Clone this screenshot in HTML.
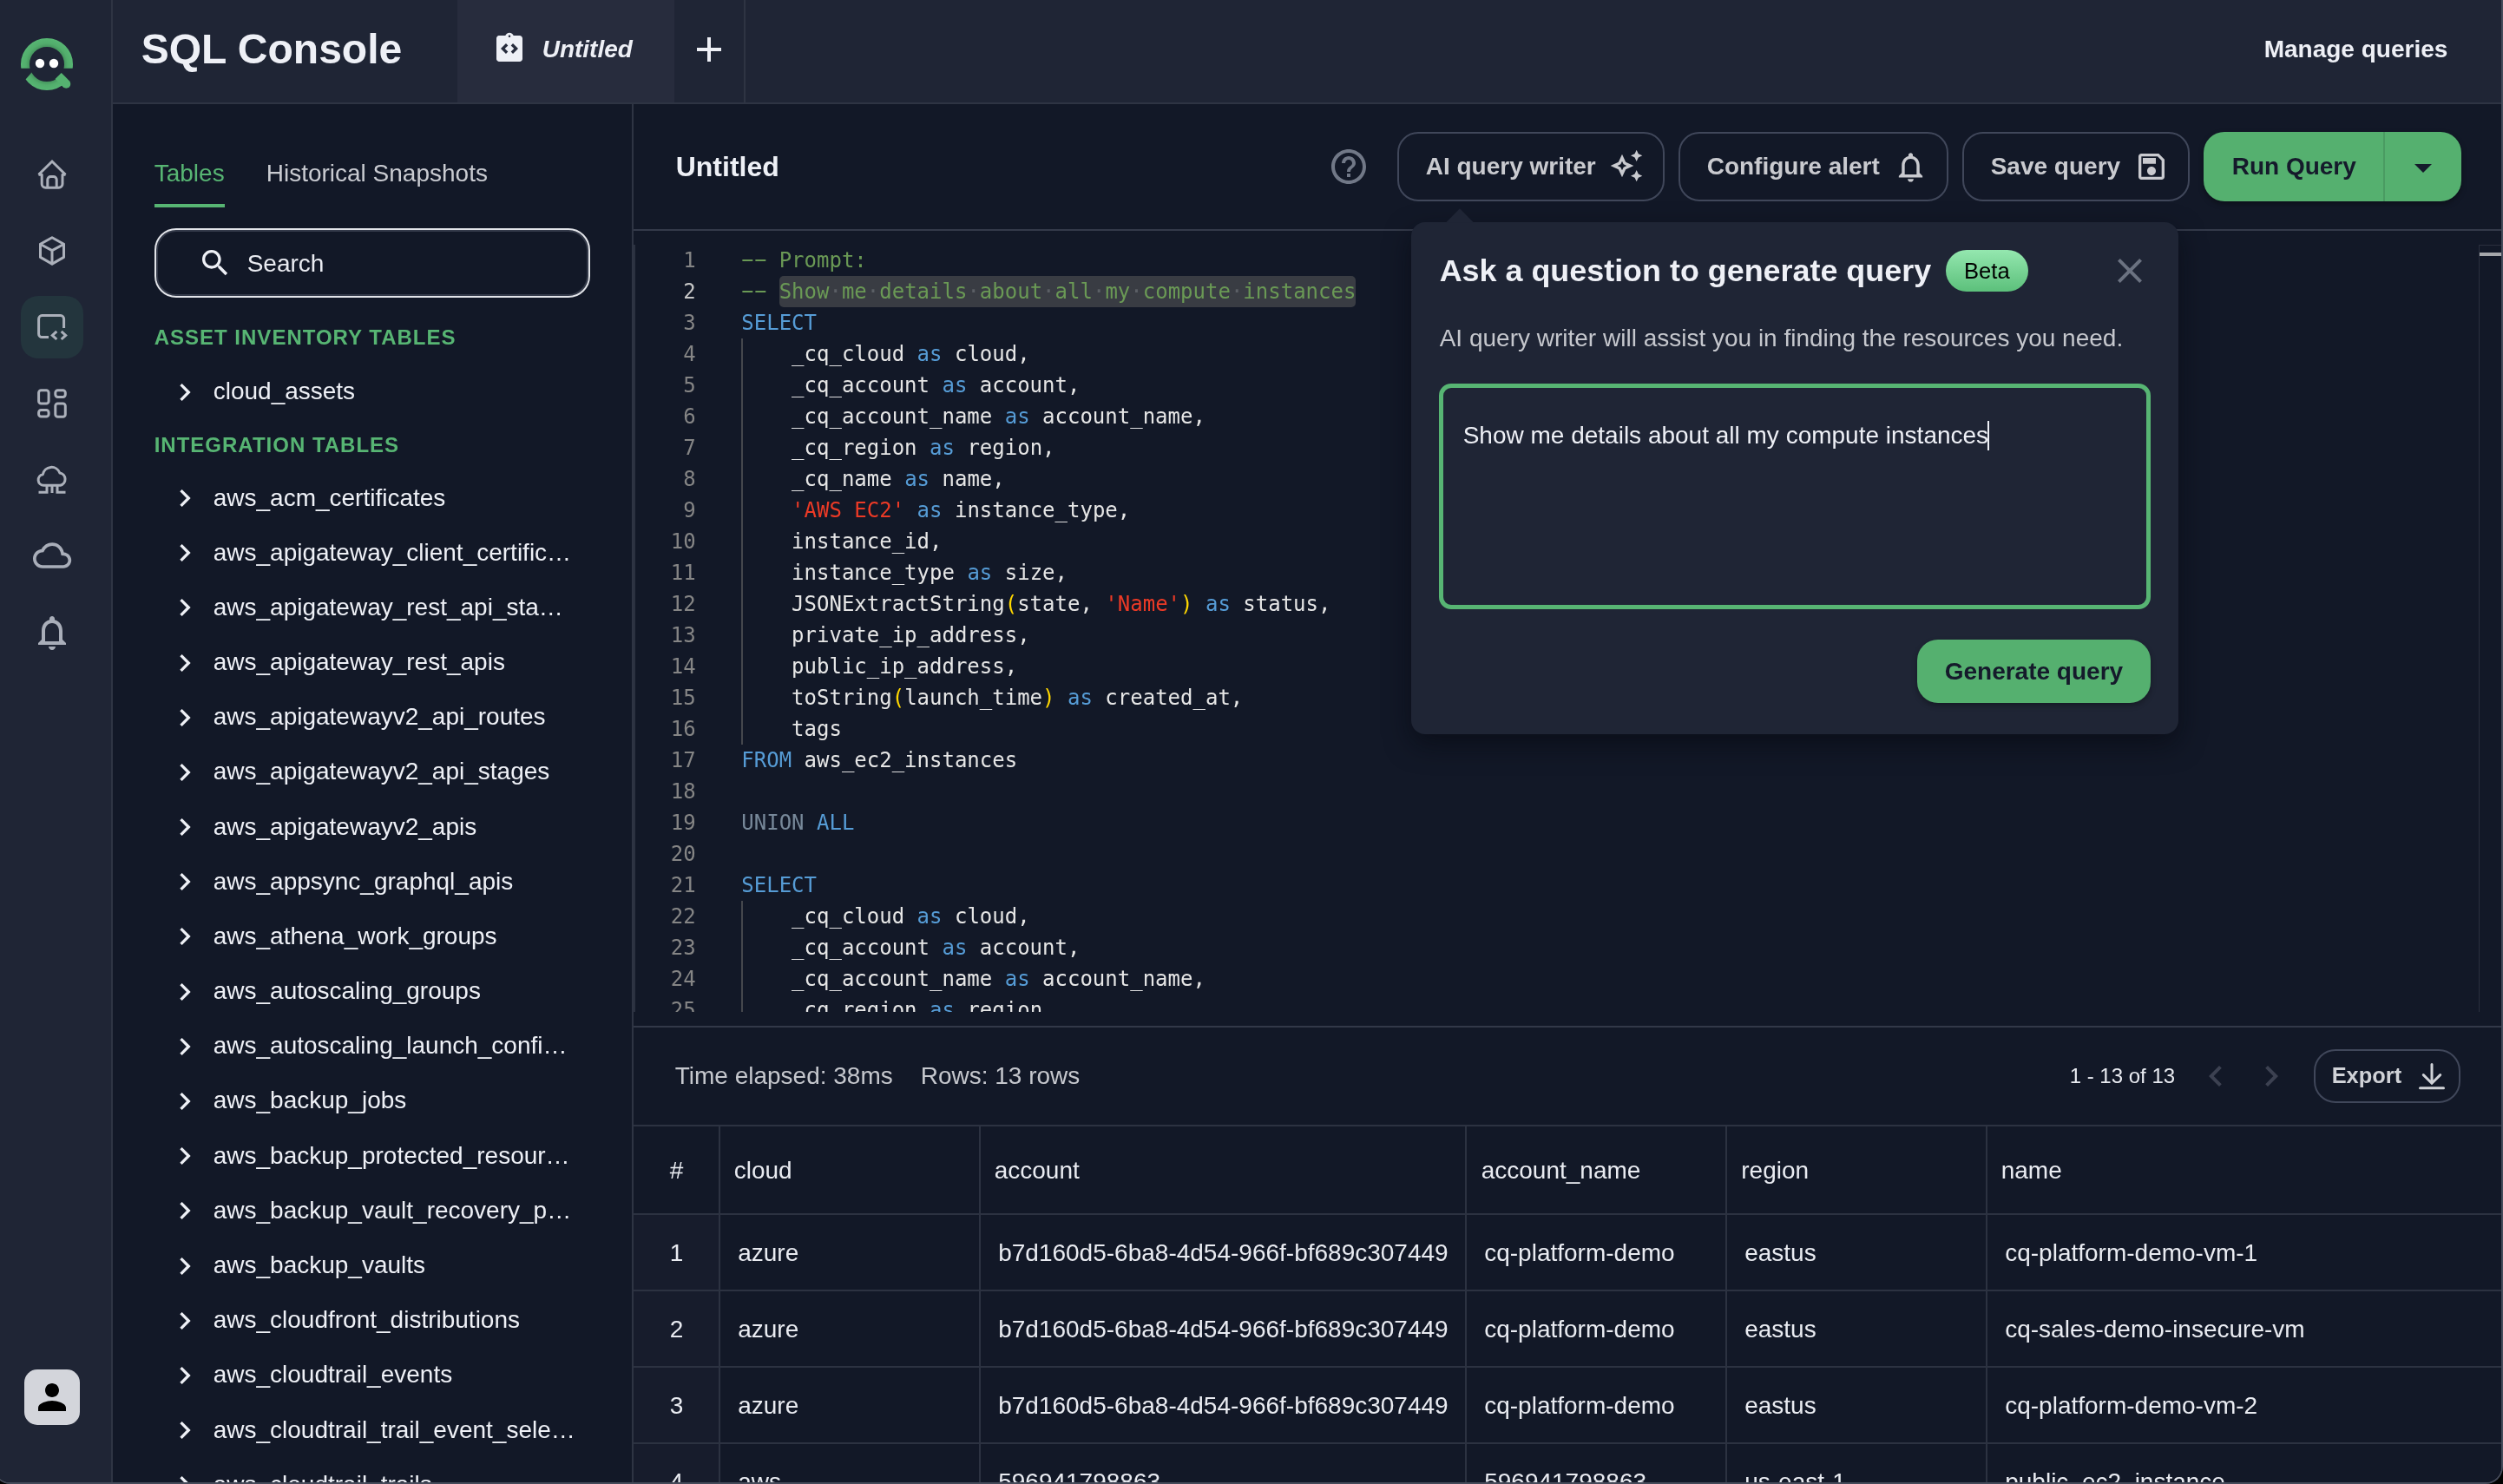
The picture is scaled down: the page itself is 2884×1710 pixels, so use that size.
<!DOCTYPE html>
<html lang="en"><head><meta charset="utf-8"><title>SQL Console</title>
<style>
*{box-sizing:border-box;margin:0;padding:0}
html,body{width:2884px;height:1710px;overflow:hidden;background:#000}
body{font-family:"Liberation Sans",sans-serif;position:relative;color:#e9ebf1;-webkit-font-smoothing:antialiased}
#win{position:absolute;left:-8px;top:0;width:2892px;height:1710px;border:2.3px solid #454b5a;border-top:none;border-radius:0 0 20px 20px;overflow:hidden;background:#121827;will-change:transform}
#app{position:absolute;left:5.7px;top:0;width:2884px;height:1710px;background:#121827}
.abs{position:absolute}
#rail{position:absolute;left:0;top:0;width:130px;height:1710px;background:#1f2535;border-right:2px solid #2e3443}
#hdr{position:absolute;left:130px;top:0;width:2754px;height:120px;background:#1f2535;border-bottom:2px solid #2e3443}
#side{position:absolute;left:130px;top:120px;width:600px;height:1590px;background:#121827;border-right:2px solid #2e3443;overflow:hidden}
#main{position:absolute;left:730px;top:120px;width:2154px;height:1590px;background:#121827;overflow:hidden}
svg{position:absolute;overflow:visible}
.code{font-family:"DejaVu Sans Mono","Liberation Mono",monospace;font-size:24px;line-height:36px;white-space:pre;position:absolute;color:#e6e6e6}
.ln{position:absolute;left:0;width:72px;text-align:right;color:#858585}
.c{color:#6a9955}.k{color:#569cd6}.s{color:#ec3a26}.p{color:#ffd700}.o{color:#778899}
.btn{position:absolute;border:2px solid #40475a;border-radius:24px;height:80px;top:32px}
.cell{position:absolute;white-space:nowrap;font-size:28px;line-height:28px;color:#e9ebf1}

.sel{}
.ws{color:#5b5f65}
.hy{display:inline-block;transform:translateY(-0.8px) scaleX(1.95)}
</style></head><body>
<div id="win"><div id="app">
<div id="hdr">
<div style="position:absolute;white-space:nowrap;left:33px;top:33.37px;font-size:48px;line-height:48px;color:#eef0f6;font-weight:bold;">SQL Console</div>
<div class="abs" style="left:397px;top:0;width:250px;height:118px;background:#272c3d"></div>
<svg style="left:437px;top:36.4px" width="40" height="40" viewBox="0 0 24 24"><path fill="#eef0f6" d="M19 3h-4.180C14.400 1.840 13.300 1 12 1s-2.400.840-2.820 2H5c-.140 0-.270.010-.400.040-.390.080-.740.280-1.010.550-.180.180-.330.400-.430.640-.100.230-.160.490-.160.770v14c0 .270.060.540.160.780s.250.450.430.640c.270.270.620.470 1.010.550.130.020.260.030.400.030h14c1.100 0 2-.900 2-2V5c0-1.100-.900-2-2-2zM11 14.170l-1.410 1.420L6 12l3.590-3.590L11 9.830 8.830 12 11 14.170zm1-9.920c-.410 0-.750-.340-.750-.750s.340-.750.750-.750.750.340.750.750-.340.750-.750.750zm2.410 11.340L13 14.170 15.170 12 13 9.830l1.410-1.420L18 12l-3.590 3.590z"/></svg>
<div style="position:absolute;white-space:nowrap;left:495px;top:43.20px;font-size:28px;line-height:28px;color:#eef0f6;font-weight:bold;font-style:italic;">Untitled</div>
<div class="abs" style="left:673px;top:55px;width:28px;height:4px;background:#eef0f6"></div><div class="abs" style="left:685px;top:43px;width:4px;height:28px;background:#eef0f6"></div>
<div class="abs" style="left:727px;top:0;width:2px;height:118px;background:#2e3443"></div>
<div style="position:absolute;white-space:nowrap;left:2479px;top:42.90px;font-size:28px;line-height:28px;color:#eef0f6;font-weight:bold;">Manage queries</div>
</div>
<div id="side">
<div style="position:absolute;white-space:nowrap;left:48px;top:66.20px;font-size:28px;line-height:28px;color:#57b573;">Tables</div>
<div class="abs" style="left:48px;top:115px;width:81px;height:4px;background:#57b573"></div>
<div style="position:absolute;white-space:nowrap;left:177px;top:66.20px;font-size:28px;line-height:28px;color:#c9cbd1;">Historical Snapshots</div>
<div class="abs" style="left:48px;top:142.60000000000002px;width:502px;height:80.6px;border:2px solid #e2e4e9;border-radius:25px;box-shadow:inset 0 0 0 2px #343a4a"></div>
<svg style="left:98px;top:163px" width="40" height="40" viewBox="0 0 24 24"><path fill="#eef0f6" d="M15.5 14h-.79l-.28-.27C15.41 12.59 16 11.11 16 9.5 16 5.91 13.09 3 9.5 3S3 5.91 3 9.5 5.91 16 9.5 16c1.61 0 3.09-.59 4.23-1.57l.27.28v.79l5 4.99L20.49 19l-4.99-5zm-6 0C7.01 14 5 11.99 5 9.5S7.01 5 9.5 5 14 7.01 14 9.5 11.99 14 9.5 14z"/></svg>
<div style="position:absolute;white-space:nowrap;left:155px;top:169.70px;font-size:28px;line-height:28px;color:#e9ebf1;">Search</div>
<div style="position:absolute;white-space:nowrap;left:48px;top:256.78px;font-size:24px;line-height:24px;color:#57b573;font-weight:bold;letter-spacing:1.0px;">ASSET INVENTORY TABLES</div>
<svg style="left:63.7px;top:311.7px" width="40" height="40" viewBox="0 0 24 24"><path fill="#eef0f6" d="M10 6L8.59 7.41 13.17 12l-4.58 4.59L10 18l6-6z"/></svg>
<div style="position:absolute;white-space:nowrap;left:116px;top:317.20px;font-size:28px;line-height:28px;color:#eef0f6;">cloud_assets</div>
<div style="position:absolute;white-space:nowrap;left:48px;top:381.38px;font-size:24px;line-height:24px;color:#57b573;font-weight:bold;letter-spacing:1.0px;">INTEGRATION TABLES</div>
<svg style="left:63.7px;top:434.0px" width="40" height="40" viewBox="0 0 24 24"><path fill="#eef0f6" d="M10 6L8.59 7.41 13.17 12l-4.58 4.59L10 18l6-6z"/></svg>
<div style="position:absolute;white-space:nowrap;left:116px;top:439.50px;font-size:28px;line-height:28px;color:#eef0f6;">aws_acm_certificates</div>
<svg style="left:63.7px;top:497.2px" width="40" height="40" viewBox="0 0 24 24"><path fill="#eef0f6" d="M10 6L8.59 7.41 13.17 12l-4.58 4.59L10 18l6-6z"/></svg>
<div style="position:absolute;white-space:nowrap;left:116px;top:502.68px;font-size:28px;line-height:28px;color:#eef0f6;">aws_apigateway_client_certific…</div>
<svg style="left:63.7px;top:560.4px" width="40" height="40" viewBox="0 0 24 24"><path fill="#eef0f6" d="M10 6L8.59 7.41 13.17 12l-4.58 4.59L10 18l6-6z"/></svg>
<div style="position:absolute;white-space:nowrap;left:116px;top:565.86px;font-size:28px;line-height:28px;color:#eef0f6;">aws_apigateway_rest_api_sta…</div>
<svg style="left:63.7px;top:623.5px" width="40" height="40" viewBox="0 0 24 24"><path fill="#eef0f6" d="M10 6L8.59 7.41 13.17 12l-4.58 4.59L10 18l6-6z"/></svg>
<div style="position:absolute;white-space:nowrap;left:116px;top:629.04px;font-size:28px;line-height:28px;color:#eef0f6;">aws_apigateway_rest_apis</div>
<svg style="left:63.7px;top:686.7px" width="40" height="40" viewBox="0 0 24 24"><path fill="#eef0f6" d="M10 6L8.59 7.41 13.17 12l-4.58 4.59L10 18l6-6z"/></svg>
<div style="position:absolute;white-space:nowrap;left:116px;top:692.22px;font-size:28px;line-height:28px;color:#eef0f6;">aws_apigatewayv2_api_routes</div>
<svg style="left:63.7px;top:749.9px" width="40" height="40" viewBox="0 0 24 24"><path fill="#eef0f6" d="M10 6L8.59 7.41 13.17 12l-4.58 4.59L10 18l6-6z"/></svg>
<div style="position:absolute;white-space:nowrap;left:116px;top:755.40px;font-size:28px;line-height:28px;color:#eef0f6;">aws_apigatewayv2_api_stages</div>
<svg style="left:63.7px;top:813.1px" width="40" height="40" viewBox="0 0 24 24"><path fill="#eef0f6" d="M10 6L8.59 7.41 13.17 12l-4.58 4.59L10 18l6-6z"/></svg>
<div style="position:absolute;white-space:nowrap;left:116px;top:818.58px;font-size:28px;line-height:28px;color:#eef0f6;">aws_apigatewayv2_apis</div>
<svg style="left:63.7px;top:876.3px" width="40" height="40" viewBox="0 0 24 24"><path fill="#eef0f6" d="M10 6L8.59 7.41 13.17 12l-4.58 4.59L10 18l6-6z"/></svg>
<div style="position:absolute;white-space:nowrap;left:116px;top:881.76px;font-size:28px;line-height:28px;color:#eef0f6;">aws_appsync_graphql_apis</div>
<svg style="left:63.7px;top:939.4px" width="40" height="40" viewBox="0 0 24 24"><path fill="#eef0f6" d="M10 6L8.59 7.41 13.17 12l-4.58 4.59L10 18l6-6z"/></svg>
<div style="position:absolute;white-space:nowrap;left:116px;top:944.94px;font-size:28px;line-height:28px;color:#eef0f6;">aws_athena_work_groups</div>
<svg style="left:63.7px;top:1002.6px" width="40" height="40" viewBox="0 0 24 24"><path fill="#eef0f6" d="M10 6L8.59 7.41 13.17 12l-4.58 4.59L10 18l6-6z"/></svg>
<div style="position:absolute;white-space:nowrap;left:116px;top:1008.12px;font-size:28px;line-height:28px;color:#eef0f6;">aws_autoscaling_groups</div>
<svg style="left:63.7px;top:1065.8px" width="40" height="40" viewBox="0 0 24 24"><path fill="#eef0f6" d="M10 6L8.59 7.41 13.17 12l-4.58 4.59L10 18l6-6z"/></svg>
<div style="position:absolute;white-space:nowrap;left:116px;top:1071.30px;font-size:28px;line-height:28px;color:#eef0f6;">aws_autoscaling_launch_confi…</div>
<svg style="left:63.7px;top:1129.0px" width="40" height="40" viewBox="0 0 24 24"><path fill="#eef0f6" d="M10 6L8.59 7.41 13.17 12l-4.58 4.59L10 18l6-6z"/></svg>
<div style="position:absolute;white-space:nowrap;left:116px;top:1134.48px;font-size:28px;line-height:28px;color:#eef0f6;">aws_backup_jobs</div>
<svg style="left:63.7px;top:1192.2px" width="40" height="40" viewBox="0 0 24 24"><path fill="#eef0f6" d="M10 6L8.59 7.41 13.17 12l-4.58 4.59L10 18l6-6z"/></svg>
<div style="position:absolute;white-space:nowrap;left:116px;top:1197.66px;font-size:28px;line-height:28px;color:#eef0f6;">aws_backup_protected_resour…</div>
<svg style="left:63.7px;top:1255.3px" width="40" height="40" viewBox="0 0 24 24"><path fill="#eef0f6" d="M10 6L8.59 7.41 13.17 12l-4.58 4.59L10 18l6-6z"/></svg>
<div style="position:absolute;white-space:nowrap;left:116px;top:1260.84px;font-size:28px;line-height:28px;color:#eef0f6;">aws_backup_vault_recovery_p…</div>
<svg style="left:63.7px;top:1318.5px" width="40" height="40" viewBox="0 0 24 24"><path fill="#eef0f6" d="M10 6L8.59 7.41 13.17 12l-4.58 4.59L10 18l6-6z"/></svg>
<div style="position:absolute;white-space:nowrap;left:116px;top:1324.02px;font-size:28px;line-height:28px;color:#eef0f6;">aws_backup_vaults</div>
<svg style="left:63.7px;top:1381.7px" width="40" height="40" viewBox="0 0 24 24"><path fill="#eef0f6" d="M10 6L8.59 7.41 13.17 12l-4.58 4.59L10 18l6-6z"/></svg>
<div style="position:absolute;white-space:nowrap;left:116px;top:1387.20px;font-size:28px;line-height:28px;color:#eef0f6;">aws_cloudfront_distributions</div>
<svg style="left:63.7px;top:1444.9px" width="40" height="40" viewBox="0 0 24 24"><path fill="#eef0f6" d="M10 6L8.59 7.41 13.17 12l-4.58 4.59L10 18l6-6z"/></svg>
<div style="position:absolute;white-space:nowrap;left:116px;top:1450.38px;font-size:28px;line-height:28px;color:#eef0f6;">aws_cloudtrail_events</div>
<svg style="left:63.7px;top:1508.1px" width="40" height="40" viewBox="0 0 24 24"><path fill="#eef0f6" d="M10 6L8.59 7.41 13.17 12l-4.58 4.59L10 18l6-6z"/></svg>
<div style="position:absolute;white-space:nowrap;left:116px;top:1513.56px;font-size:28px;line-height:28px;color:#eef0f6;">aws_cloudtrail_trail_event_sele…</div>
<svg style="left:63.7px;top:1571.2px" width="40" height="40" viewBox="0 0 24 24"><path fill="#eef0f6" d="M10 6L8.59 7.41 13.17 12l-4.58 4.59L10 18l6-6z"/></svg>
<div style="position:absolute;white-space:nowrap;left:116px;top:1576.74px;font-size:28px;line-height:28px;color:#eef0f6;">aws_cloudtrail_trails</div>
</div>
<div id="main">
<div class="abs" style="left:0;top:144px;width:2154px;height:2px;background:#343a4a"></div>
<div style="position:absolute;white-space:nowrap;left:49px;top:55.81px;font-size:32px;line-height:32px;color:#eef0f6;font-weight:bold;">Untitled</div>
<svg style="left:800px;top:48px" width="48" height="48" viewBox="0 0 24 24"><path fill="#717887" d="M11 18h2v-2h-2v2zm1-16C6.48 2 2 6.48 2 12s4.48 10 10 10 10-4.48 10-10S17.52 2 12 2zm0 18c-4.41 0-8-3.59-8-8s3.59-8 8-8 8 3.59 8 8-3.59 8-8 8zm0-14c-2.21 0-4 1.79-4 4h2c0-1.1.9-2 2-2s2 .9 2 2c0 2-3 1.75-3 5h2c0-2.25 3-2.5 3-5 0-2.21-1.79-4-4-4z"/></svg>
<div class="btn" style="left:880px;width:308px"></div>
<div style="position:absolute;white-space:nowrap;left:913px;top:58.20px;font-size:28px;line-height:28px;color:#c9cacf;font-weight:bold;">AI query writer</div>
<svg style="left:1124px;top:51px" width="40" height="40" viewBox="0 0 24 24"><path fill="#c9cacf" d="m19 9 1.25-2.75L23 5l-2.75-1.25L19 1l-1.25 2.75L15 5l2.75 1.25zm0 6-1.25 2.75L15 19l2.75 1.25L19 23l1.25-2.75L23 19l-2.75-1.25zm-7.5-5.5L9 4 6.500 9.500 1 12l5.500 2.500L9 20l2.500-5.500L17 12l-5.500-2.500zm-1.510 3.490L9 15.170l-.990-2.180L5.830 12l2.180-.990L9 8.830l.990 2.180 2.180.990-2.180.990z"/></svg>
<div class="btn" style="left:1204px;width:311px"></div>
<div style="position:absolute;white-space:nowrap;left:1237px;top:58.20px;font-size:28px;line-height:28px;color:#c9cacf;font-weight:bold;">Configure alert</div>
<svg style="left:1451px;top:51.5px" width="41" height="41" viewBox="0 0 24 24"><path fill="#c9cacf" d="M12 22c1.1 0 2-.9 2-2h-4c0 1.1.9 2 2 2zm6-6v-5c0-3.07-1.63-5.64-4.5-6.320V4c0-.83-.67-1.500-1.500-1.500s-1.500.67-1.500 1.500v.68C7.640 5.360 6 7.920 6 11v5l-2 2v1h16v-1l-2-2zm-2 1H8v-6c0-2.480 1.510-4.500 4-4.500s4 2.020 4 4.500v6z"/></svg>
<div class="btn" style="left:1531px;width:262px"></div>
<div style="position:absolute;white-space:nowrap;left:1564px;top:58.20px;font-size:28px;line-height:28px;color:#c9cacf;font-weight:bold;">Save query</div>
<svg style="left:1729px;top:52px" width="40" height="40" viewBox="0 0 24 24"><path fill="#c9cacf" d="M17 3H5c-1.110 0-2 .9-2 2v14c0 1.100.89 2 2 2h14c1.100 0 2-.9 2-2V7l-4-4zm2 16H5V5h11.170L19 7.830V19zm-7-7c-1.660 0-3 1.340-3 3s1.340 3 3 3 3-1.340 3-3-1.340-3-3-3zM6 6h9v4H6z"/></svg>
<div class="abs" style="left:1809px;top:32px;width:297px;height:80px;border-radius:24px;background:#55b06f;box-shadow:0 3px 6px rgba(0,0,0,.35)"></div>
<div class="abs" style="left:2016px;top:32px;width:2px;height:80px;background:#4a9b62"></div>
<div style="position:absolute;white-space:nowrap;left:1842px;top:57.70px;font-size:28px;line-height:28px;color:#151a2b;font-weight:bold;">Run Query</div>
<svg style="left:2052px;top:68.5px" width="20" height="10" viewBox="0 0 20 10"><path d="M0 0h20L10 10z" fill="#151a2b"/></svg>
<div class="abs" style="left:0;top:162px;width:2154px;height:884px;overflow:hidden">
<div class="abs" style="left:0;top:0;width:2px;height:900px;background:#2b3140"></div>
<div class="abs" style="left:168px;top:36px;width:664px;height:36px;border-radius:5px;background:#393c43"></div>
<div class="abs" style="left:124px;top:108px;width:2px;height:468px;background:#45474d"></div>
<div class="abs" style="left:124px;top:756px;width:2px;height:180px;background:#45474d"></div>
<div class="code ln" style="top:0px;color:#858585">1</div>
<div class="code" style="left:124.60000000000002px;top:0px"><span class="c"><span class="hy">-</span><span class="hy">-</span> Prompt:</span></div>
<div class="code ln" style="top:36px;color:#c6c6c6">2</div>
<div class="code" style="left:124.60000000000002px;top:36px"><span class="c"><span class="hy">-</span><span class="hy">-</span> </span><span class="sel"><span class="c">Show<span class="ws">·</span>me<span class="ws">·</span>details<span class="ws">·</span>about<span class="ws">·</span>all<span class="ws">·</span>my<span class="ws">·</span>compute<span class="ws">·</span>instances</span></span></div>
<div class="code ln" style="top:72px;color:#858585">3</div>
<div class="code" style="left:124.60000000000002px;top:72px"><span class="k">SELECT</span></div>
<div class="code ln" style="top:108px;color:#858585">4</div>
<div class="code" style="left:124.60000000000002px;top:108px">    _cq_cloud <span class="k">as</span> cloud,</div>
<div class="code ln" style="top:144px;color:#858585">5</div>
<div class="code" style="left:124.60000000000002px;top:144px">    _cq_account <span class="k">as</span> account,</div>
<div class="code ln" style="top:180px;color:#858585">6</div>
<div class="code" style="left:124.60000000000002px;top:180px">    _cq_account_name <span class="k">as</span> account_name,</div>
<div class="code ln" style="top:216px;color:#858585">7</div>
<div class="code" style="left:124.60000000000002px;top:216px">    _cq_region <span class="k">as</span> region,</div>
<div class="code ln" style="top:252px;color:#858585">8</div>
<div class="code" style="left:124.60000000000002px;top:252px">    _cq_name <span class="k">as</span> name,</div>
<div class="code ln" style="top:288px;color:#858585">9</div>
<div class="code" style="left:124.60000000000002px;top:288px">    <span class="s">'AWS EC2'</span> <span class="k">as</span> instance_type,</div>
<div class="code ln" style="top:324px;color:#858585">10</div>
<div class="code" style="left:124.60000000000002px;top:324px">    instance_id,</div>
<div class="code ln" style="top:360px;color:#858585">11</div>
<div class="code" style="left:124.60000000000002px;top:360px">    instance_type <span class="k">as</span> size,</div>
<div class="code ln" style="top:396px;color:#858585">12</div>
<div class="code" style="left:124.60000000000002px;top:396px">    JSONExtractString<span class="p">(</span>state, <span class="s">'Name'</span><span class="p">)</span> <span class="k">as</span> status,</div>
<div class="code ln" style="top:432px;color:#858585">13</div>
<div class="code" style="left:124.60000000000002px;top:432px">    private_ip_address,</div>
<div class="code ln" style="top:468px;color:#858585">14</div>
<div class="code" style="left:124.60000000000002px;top:468px">    public_ip_address,</div>
<div class="code ln" style="top:504px;color:#858585">15</div>
<div class="code" style="left:124.60000000000002px;top:504px">    toString<span class="p">(</span>launch_time<span class="p">)</span> <span class="k">as</span> created_at,</div>
<div class="code ln" style="top:540px;color:#858585">16</div>
<div class="code" style="left:124.60000000000002px;top:540px">    tags</div>
<div class="code ln" style="top:576px;color:#858585">17</div>
<div class="code" style="left:124.60000000000002px;top:576px"><span class="k">FROM</span> aws_ec2_instances</div>
<div class="code ln" style="top:612px;color:#858585">18</div>
<div class="code ln" style="top:648px;color:#858585">19</div>
<div class="code" style="left:124.60000000000002px;top:648px"><span class="o">UNION</span> <span class="k">ALL</span></div>
<div class="code ln" style="top:684px;color:#858585">20</div>
<div class="code ln" style="top:720px;color:#858585">21</div>
<div class="code" style="left:124.60000000000002px;top:720px"><span class="k">SELECT</span></div>
<div class="code ln" style="top:756px;color:#858585">22</div>
<div class="code" style="left:124.60000000000002px;top:756px">    _cq_cloud <span class="k">as</span> cloud,</div>
<div class="code ln" style="top:792px;color:#858585">23</div>
<div class="code" style="left:124.60000000000002px;top:792px">    _cq_account <span class="k">as</span> account,</div>
<div class="code ln" style="top:828px;color:#858585">24</div>
<div class="code" style="left:124.60000000000002px;top:828px">    _cq_account_name <span class="k">as</span> account_name,</div>
<div class="code ln" style="top:864px;color:#858585">25</div>
<div class="code" style="left:124.60000000000002px;top:864px">    _cq_region <span class="k">as</span> region,</div>
</div>
<div class="abs" style="left:2126px;top:162px;width:30px;height:884px;border-left:1px solid #2a2f3e;border-top:1px solid #2a2f3e"></div>
<div class="abs" style="left:2127px;top:171px;width:27px;height:4px;background:#a5a7ab"></div>
<div class="abs" style="left:0;top:1062px;width:2154px;height:2px;background:#323848"></div>
<div style="position:absolute;white-space:nowrap;left:48px;top:1105.90px;font-size:28px;line-height:28px;color:#c5c7cd;">Time elapsed: 38ms</div>
<div style="position:absolute;white-space:nowrap;left:331px;top:1105.90px;font-size:28px;line-height:28px;color:#c5c7cd;">Rows: 13 rows</div>
<div style="position:absolute;white-space:nowrap;left:1655px;top:1107.58px;font-size:24px;line-height:24px;color:#e9ebf1;">1 - 13 of 13</div>
<svg style="left:1799.8000000000002px;top:1096.3px" width="48" height="48" viewBox="0 0 24 24"><path fill="#3c4151" d="M15.41 7.41L14 6l-6 6 6 6 1.41-1.41L10.83 12z"/></svg>
<svg style="left:1863.8000000000002px;top:1096.3px" width="48" height="48" viewBox="0 0 24 24"><path fill="#3c4151" d="M10 6L8.59 7.41 13.17 12l-4.58 4.59L10 18l6-6z"/></svg>
<div class="abs" style="left:1936px;top:1089px;width:169px;height:62px;border:2px solid #40475a;border-radius:25px"></div>
<div style="position:absolute;white-space:nowrap;left:1957px;top:1106.80px;font-size:25.4px;line-height:25.4px;color:#d0d2d7;font-weight:bold;">Export</div>
<svg style="left:2057px;top:1105px" width="30" height="30" viewBox="0 0 30 30"><path d="M15 1.5 V22 M5.3 13.6 L15 23.2 L24.7 13.6 M1.5 28.8 H28.5" fill="none" stroke="#d0d2d7" stroke-width="3" stroke-linecap="round" stroke-linejoin="miter"/></svg>
<div class="abs" style="left:0;top:1280px;width:98px;height:400px;background:#171c2c"></div>
<div class="abs" style="left:0;top:1176px;width:2154px;height:2px;background:#2c3241"></div>
<div class="abs" style="left:0;top:1278px;width:2154px;height:2px;background:#2c3241"></div>
<div class="abs" style="left:0;top:1366px;width:2154px;height:2px;background:#2c3241"></div>
<div class="abs" style="left:0;top:1454px;width:2154px;height:2px;background:#2c3241"></div>
<div class="abs" style="left:0;top:1542px;width:2154px;height:2px;background:#2c3241"></div>
<div class="abs" style="left:98px;top:1178px;width:2px;height:500px;background:#2c3241"></div>
<div class="abs" style="left:398px;top:1178px;width:2px;height:500px;background:#2c3241"></div>
<div class="abs" style="left:958px;top:1178px;width:2px;height:500px;background:#2c3241"></div>
<div class="abs" style="left:1258px;top:1178px;width:2px;height:500px;background:#2c3241"></div>
<div class="abs" style="left:1558px;top:1178px;width:2px;height:500px;background:#2c3241"></div>
<div style="position:absolute;white-space:nowrap;left:42px;top:1214.50px;font-size:28px;line-height:28px;color:#e9ebf1;">#</div>
<div style="position:absolute;white-space:nowrap;left:116px;top:1214.50px;font-size:28px;line-height:28px;color:#e9ebf1;">cloud</div>
<div style="position:absolute;white-space:nowrap;left:416px;top:1214.50px;font-size:28px;line-height:28px;color:#e9ebf1;">account</div>
<div style="position:absolute;white-space:nowrap;left:977px;top:1214.50px;font-size:28px;line-height:28px;color:#e9ebf1;">account_name</div>
<div style="position:absolute;white-space:nowrap;left:1276.6px;top:1214.50px;font-size:28px;line-height:28px;color:#e9ebf1;">region</div>
<div style="position:absolute;white-space:nowrap;left:1576px;top:1214.50px;font-size:28px;line-height:28px;color:#e9ebf1;">name</div>
<div style="position:absolute;white-space:nowrap;left:42px;top:1310.10px;font-size:28px;line-height:28px;color:#e9ebf1;">1</div>
<div style="position:absolute;white-space:nowrap;left:120.5px;top:1310.10px;font-size:28px;line-height:28px;color:#e9ebf1;">azure</div>
<div style="position:absolute;white-space:nowrap;left:420.5px;top:1310.10px;font-size:28px;line-height:28px;color:#e9ebf1;">b7d160d5-6ba8-4d54-966f-bf689c307449</div>
<div style="position:absolute;white-space:nowrap;left:980.5px;top:1310.10px;font-size:28px;line-height:28px;color:#e9ebf1;">cq-platform-demo</div>
<div style="position:absolute;white-space:nowrap;left:1280.5px;top:1310.10px;font-size:28px;line-height:28px;color:#e9ebf1;">eastus</div>
<div style="position:absolute;white-space:nowrap;left:1580.5px;top:1310.10px;font-size:28px;line-height:28px;color:#e9ebf1;">cq-platform-demo-vm-1</div>
<div style="position:absolute;white-space:nowrap;left:42px;top:1398.05px;font-size:28px;line-height:28px;color:#e9ebf1;">2</div>
<div style="position:absolute;white-space:nowrap;left:120.5px;top:1398.05px;font-size:28px;line-height:28px;color:#e9ebf1;">azure</div>
<div style="position:absolute;white-space:nowrap;left:420.5px;top:1398.05px;font-size:28px;line-height:28px;color:#e9ebf1;">b7d160d5-6ba8-4d54-966f-bf689c307449</div>
<div style="position:absolute;white-space:nowrap;left:980.5px;top:1398.05px;font-size:28px;line-height:28px;color:#e9ebf1;">cq-platform-demo</div>
<div style="position:absolute;white-space:nowrap;left:1280.5px;top:1398.05px;font-size:28px;line-height:28px;color:#e9ebf1;">eastus</div>
<div style="position:absolute;white-space:nowrap;left:1580.5px;top:1398.05px;font-size:28px;line-height:28px;color:#e9ebf1;">cq-sales-demo-insecure-vm</div>
<div style="position:absolute;white-space:nowrap;left:42px;top:1486.00px;font-size:28px;line-height:28px;color:#e9ebf1;">3</div>
<div style="position:absolute;white-space:nowrap;left:120.5px;top:1486.00px;font-size:28px;line-height:28px;color:#e9ebf1;">azure</div>
<div style="position:absolute;white-space:nowrap;left:420.5px;top:1486.00px;font-size:28px;line-height:28px;color:#e9ebf1;">b7d160d5-6ba8-4d54-966f-bf689c307449</div>
<div style="position:absolute;white-space:nowrap;left:980.5px;top:1486.00px;font-size:28px;line-height:28px;color:#e9ebf1;">cq-platform-demo</div>
<div style="position:absolute;white-space:nowrap;left:1280.5px;top:1486.00px;font-size:28px;line-height:28px;color:#e9ebf1;">eastus</div>
<div style="position:absolute;white-space:nowrap;left:1580.5px;top:1486.00px;font-size:28px;line-height:28px;color:#e9ebf1;">cq-platform-demo-vm-2</div>
<div style="position:absolute;white-space:nowrap;left:42px;top:1573.95px;font-size:28px;line-height:28px;color:#e9ebf1;">4</div>
<div style="position:absolute;white-space:nowrap;left:120.5px;top:1573.95px;font-size:28px;line-height:28px;color:#e9ebf1;">aws</div>
<div style="position:absolute;white-space:nowrap;left:420.5px;top:1573.95px;font-size:28px;line-height:28px;color:#e9ebf1;">596941798863</div>
<div style="position:absolute;white-space:nowrap;left:980.5px;top:1573.95px;font-size:28px;line-height:28px;color:#e9ebf1;">596941798863</div>
<div style="position:absolute;white-space:nowrap;left:1280.5px;top:1573.95px;font-size:28px;line-height:28px;color:#e9ebf1;">us-east-1</div>
<div style="position:absolute;white-space:nowrap;left:1580.5px;top:1573.95px;font-size:28px;line-height:28px;color:#e9ebf1;">public_ec2_instance</div>
<div class="abs" style="left:896px;top:136px;width:884px;height:590px;border-radius:16px;background:#1f2535;box-shadow:0 12px 30px 0 rgba(5,7,14,.55)">
<div style="position:absolute;white-space:nowrap;left:33px;top:39.21px;font-size:35.9px;line-height:35.9px;color:#eef0f6;font-weight:bold;">Ask a question to generate query</div>
<div class="abs" style="left:616px;top:32px;width:95px;height:48px;border-radius:24px;background:linear-gradient(#94e7af,#5cc07b)"></div>
<div style="position:absolute;white-space:nowrap;left:637.3000000000002px;top:43.93px;font-size:25.6px;line-height:25.6px;color:#000;">Beta</div>
<svg style="left:804.6999999999998px;top:31.899999999999977px" width="48" height="48" viewBox="0 0 24 24"><path fill="#6b7281" d="M19 6.41L17.59 5 12 10.59 6.41 5 5 6.410 10.590 12 5 17.590 6.410 19 12 13.410 17.590 19 19 17.590 13.410 12z"/></svg>
<div style="position:absolute;white-space:nowrap;left:33px;top:119.90px;font-size:28px;line-height:28px;color:#c5c7cd;">AI query writer will assist you in finding the resources you need.</div>
<div class="abs" style="left:32px;top:186px;width:820px;height:260px;border:5.5px solid #57b573;border-radius:14px"></div>
<div style="position:absolute;white-space:nowrap;left:60px;top:232.20px;font-size:28px;line-height:28px;color:#eef0f6;">Show me details about all my compute instances</div>
<div class="abs" style="left:664.5px;top:229px;width:2px;height:34px;background:#eef0f6"></div>
<div class="abs" style="left:583px;top:481px;width:269px;height:73px;border-radius:24px;background:#55b06f;box-shadow:0 3px 6px rgba(0,0,0,.3)"></div>
<div style="position:absolute;white-space:nowrap;left:615px;top:504.20px;font-size:28px;line-height:28px;color:#151a2b;font-weight:bold;">Generate query</div>
</div>
<svg style="left:936px;top:120px" width="32" height="16.5" viewBox="0 0 32 16.5"><path d="M0 16.5 L16 0.3 L32 16.5z" fill="#1f2535"/></svg>
</div>
<div id="rail">
<div class="abs" style="left:24px;top:341px;width:72px;height:72px;border-radius:20px;background:#23353d"></div>
<svg style="left:0;top:0" width="128" height="128" viewBox="0 0 128 128">
<defs><radialGradient id="lg" gradientUnits="userSpaceOnUse" cx="54" cy="74" r="30"><stop offset="0.62" stop-color="#418c59"/><stop offset="0.8" stop-color="#52ad6c"/><stop offset="1" stop-color="#57b673"/></radialGradient>
<clipPath id="cu"><rect x="20" y="40" width="70" height="38.8"/></clipPath>
<clipPath id="cl"><polygon points="54,74 36.5,83.4 24,97.8 24,110 92,110 92,105.4 70.6,84"/></clipPath></defs>
<circle cx="54" cy="74" r="25" fill="none" stroke="url(#lg)" stroke-width="10" clip-path="url(#cu)"/>
<circle cx="54" cy="74" r="25" fill="none" stroke="url(#lg)" stroke-width="10" clip-path="url(#cl)"/>
<path d="M67.1 87.5 L76.3 96.7" stroke="#55b270" stroke-width="10" stroke-linecap="butt" fill="none"/><circle cx="76.3" cy="96.7" r="5" fill="#55b270"/>
<circle cx="46" cy="73" r="5.2" fill="#fff"/><circle cx="62" cy="73" r="5.2" fill="#fff"/>
</svg>
<svg style="left:0;top:0" width="128" height="800" viewBox="0 0 128 800">
<g fill="none" stroke="#abb0ba" stroke-width="3" stroke-linecap="round" stroke-linejoin="round">
<path d="M44.5 201.3 L60 186 L75.5 201.3" stroke-linecap="butt" stroke-linejoin="miter"/>
<path d="M44.5 201.3 H48.2 V212 a4.3 4.3 0 0 0 4.3 4.3 H67.7 a4.3 4.3 0 0 0 4.3 -4.3 V201.3 H75.5" stroke-linecap="butt"/>
<path d="M54.8 216 V207 a3.6 3.6 0 0 1 3.6 -3.6 h3.2 a3.6 3.6 0 0 1 3.6 3.6 V216" stroke-linecap="butt"/>
<path d="M60 273.7 L73.5 281.3 V296.4 L60 304.1 L46.5 296.4 V281.3 Z"/>
<path d="M46.7 281.5 L60 288.6 L73.3 281.5 M60 288.6 V304"/>
<path d="M56 388.6 H48.4 a3.8 3.8 0 0 1 -3.8 -3.8 V367.4 a3.8 3.8 0 0 1 3.8 -3.8 H69.8 a3.8 3.8 0 0 1 3.8 3.8 V378" stroke-linecap="butt"/>
<path d="M65.3 381.8 L60.3 386.4 L65.3 391 M70.7 381.8 L75.7 386.4 L70.7 391" stroke-linecap="butt" stroke-linejoin="miter"/>
<rect x="44.6" y="449.8" width="11.5" height="15.2" rx="2.8"/>
<rect x="63.8" y="449.8" width="11.5" height="7.6" rx="2.8"/>
<rect x="44.6" y="472.6" width="11.5" height="7.4" rx="2.8"/>
<rect x="63.8" y="465" width="11.5" height="15.2" rx="2.8"/>
<path d="M52.5 559.3 H50.5 a6.3 6.3 0 0 1 -1.2 -12.5 a10.2 10.2 0 0 1 19.6 -1.8 a7.3 7.3 0 0 1 0.6 14.3 H52.5"/>
<path d="M60 559.5 V568 M54 559.5 V567.3 H44.5 M66 559.5 V567.3 H75.5" stroke-linecap="butt" stroke-linejoin="miter"/>
</g></svg>
<svg style="left:37.9px;top:617.9px" width="44.2" height="44.2" viewBox="0 0 24 24"><path fill="#a9aeb9" d="M12 6c2.62 0 4.88 1.86 5.39 4.43l.3 1.5 1.53.11c1.56.1 2.78 1.41 2.78 2.96 0 1.65-1.35 3-3 3H6c-2.21 0-4-1.79-4-4 0-2.05 1.53-3.76 3.56-3.97l1.07-.11.5-.95C8.08 7.14 9.94 6 12 6m0-2C9.11 4 6.6 5.64 5.35 8.04 2.34 8.36 0 10.91 0 14c0 3.31 2.69 6 6 6h13c2.76 0 5-2.24 5-5 0-2.64-2.05-4.78-4.65-4.96C18.67 6.59 15.64 4 12 4z"/></svg>
<svg style="left:36px;top:705px" width="48" height="48" viewBox="0 0 24 24"><path fill="#a9aeb9" d="M12 22c1.1 0 2-.9 2-2h-4c0 1.1.9 2 2 2zm6-6v-5c0-3.07-1.63-5.64-4.5-6.32V4c0-.83-.67-1.5-1.5-1.5s-1.5.67-1.5 1.5v.68C7.64 5.36 6 7.92 6 11v5l-2 2v1h16v-1l-2-2zm-2 1H8v-6c0-2.48 1.51-4.5 4-4.5s4 2.02 4 4.5v6z"/></svg>
<div class="abs" style="left:28px;top:1578px;width:64px;height:64px;border-radius:15px;background:#d3d5db"></div>
<svg style="left:36px;top:1586px" width="48" height="48" viewBox="0 0 24 24"><path fill="#000" d="M12 12c2.21 0 4-1.79 4-4s-1.79-4-4-4-4 1.79-4 4 1.79 4 4 4zm0 2c-2.67 0-8 1.34-8 4v2h16v-2c0-2.66-5.33-4-8-4z"/></svg>
</div>
</div></div>
</body></html>
